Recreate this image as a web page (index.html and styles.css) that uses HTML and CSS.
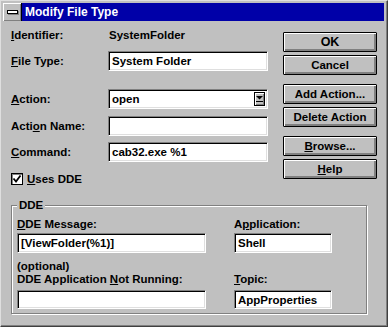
FILE: index.html
```html
<!DOCTYPE html>
<html lang="en">
<head>
    <meta charset="UTF-8">
    <title>Modify File Type</title>
    <link rel="stylesheet" href="styles.css">
</head>
<body>
    <div class="window">
        <div class="titlebar">
            <div class="sysmenu"><span class="sysmenu-bar"></span></div>
            <div class="title">Modify File Type</div>
        </div>

        <div class="dialog">
            <div class="top">
                <div class="fields">
                    <div class="row row-id">
                        <span class="label"><u>I</u>dentifier:</span>
                        <span class="value">SystemFolder</span>
                    </div>
                    <div class="row row-type">
                        <span class="label"><u>F</u>ile Type:</span>
                        <div class="edit">System Folder</div>
                    </div>
                    <div class="row row-action">
                        <span class="label"><u>A</u>ction:</span>
                        <div class="edit combo">
                            <span class="combo-text">open</span>
                            <span class="combo-btn">
                                <svg width="7" height="6" viewBox="0 0 7 6"><path d="M0 0h7L3.5 3.5z" fill="#000"/><rect x="0" y="5" width="7" height="1" fill="#000"/></svg>
                            </span>
                        </div>
                    </div>
                    <div class="row row-name">
                        <span class="label">Acti<u>o</u>n Name:</span>
                        <div class="edit"></div>
                    </div>
                    <div class="row row-cmd">
                        <span class="label"><u>C</u>ommand:</span>
                        <div class="edit">cab32.exe %1</div>
                    </div>
                    <div class="row row-dde">
                        <span class="checkbox">
                            <svg width="10" height="10" viewBox="0 0 10 10"><path d="M1.5 4.5l2.5 3 4.5-6" fill="none" stroke="#000" stroke-width="1.8"/></svg>
                        </span>
                        <span class="check-label"><u>U</u>ses DDE</span>
                    </div>
                </div>

                <div class="buttons">
                    <div class="btn btn-default">OK</div>
                    <div class="btn">Cancel</div>
                    <div class="btn btn-add">Add Action...</div>
                    <div class="btn">Delete Action</div>
                    <div class="btn btn-browse"><u>B</u>rowse...</div>
                    <div class="btn"><u>H</u>elp</div>
                </div>
            </div>

            <div class="groupbox">
                <div class="group-title">DDE</div>
                <div class="group-cols">
                    <div class="col col-left">
                        <div class="glabel"><u>D</u>DE Message:</div>
                        <div class="edit gedit">[ViewFolder(%1)]</div>
                        <div class="glabel glabel-gap">(optional)</div>
                        <div class="glabel">DDE Application <u>N</u>ot Running:</div>
                        <div class="edit gedit gedit-low"></div>
                    </div>
                    <div class="col col-right">
                        <div class="glabel">A<u>p</u>plication:</div>
                        <div class="edit gedit">Shell</div>
                        <div class="glabel glabel-topic"><u>T</u>opic:</div>
                        <div class="edit gedit gedit-low">AppProperties</div>
                    </div>
                </div>
            </div>
        </div>
    </div>
</body>
</html>
```

FILE: styles.css
```css
/* Old style Windows dialog, all grey and bold */
body {
    margin: 0;
    background-color: #c0c0c0;
    font-family: 'Liberation Sans', Arial, sans-serif;
    font-size: 11.5px;
    font-weight: bold;
    color: #000;
}
u {
    text-decoration-thickness: 1px;
    text-underline-offset: 1px;
}
.window {
    box-sizing: border-box;
    width: 388px;
    height: 327px;
    padding: 2px;
    background-color: #c0c0c0;
    border-top: 1px solid #dfdfdf;
    border-left: 1px solid #dfdfdf;
    border-right: 1px solid #404040;
    border-bottom: 1px solid #404040;
    box-shadow: inset -1px -1px 0 #808080;
}

/* Title bar */
.titlebar {
    display: flex;
    height: 18px;
    margin-right: 1px;
}
.sysmenu {
    box-sizing: border-box;
    width: 19px;
    height: 18px;
    background-color: #c0c0c0;
    border-right: 1px solid #000;
    box-shadow: inset 1px 1px 0 #fff, inset -1px -1px 0 #808080;
    display: flex;
    align-items: center;
    justify-content: center;
}
.sysmenu-bar {
    width: 9px;
    height: 2px;
    background-color: #fff;
    border: 1px solid #000;
    box-shadow: 1px 1px 0 #808080;
}
.title {
    flex-grow: 1;
    background-color: #0000a8;
    color: #fff;
    font-size: 12px;
    line-height: 18px;
    padding-left: 3px;
}

/* Dialog content */
.dialog {
    padding-left: 8px;
}
.top {
    display: flex;
    gap: 15px;
}
.fields {
    width: 257px;
    display: flex;
    flex-direction: column;
}
.row {
    display: flex;
    align-items: center;
    height: 20px;
}
.label {
    width: 97px;
    flex-shrink: 0;
}
.value {
    padding-left: 1px;
}
.row-id { margin-top: 4px; }
.row-type { margin-top: 6px; }
.row-action { margin-top: 18px; }
.row-name { margin-top: 7px; }
.row-cmd { margin-top: 6px; }
.row-dde { margin-top: 7px; }

.edit {
    box-sizing: border-box;
    width: 160px;
    height: 20px;
    padding-left: 3px;
    line-height: 18px;
    background-color: #fff;
    border-top: 1px solid #808080;
    border-left: 1px solid #808080;
    border-right: 1px solid #fff;
    border-bottom: 1px solid #fff;
    box-shadow: inset 1px 1px 0 #000, inset -1px -1px 0 #dfdfdf;
    white-space: nowrap;
    overflow: hidden;
}
.combo {
    display: flex;
    justify-content: space-between;
    padding-right: 2px;
}
.combo-btn {
    box-sizing: border-box;
    width: 11px;
    height: 14px;
    margin-top: 2px;
    background-color: #c0c0c0;
    border: 1px solid #000;
    box-shadow: inset 1px 1px 0 #fff, inset -1px -1px 0 #808080;
    display: flex;
    align-items: center;
    justify-content: center;
}
.checkbox {
    box-sizing: border-box;
    width: 12px;
    height: 12px;
    background-color: #fff;
    border: 1px solid #000;
    box-shadow: inset 1px 1px 0 #808080;
    display: flex;
    align-items: center;
    justify-content: center;
}
.check-label {
    margin-left: 4px;
}

/* Push buttons */
.buttons {
    width: 94px;
    margin-top: 11px;
    display: flex;
    flex-direction: column;
    gap: 3px;
}
.btn {
    box-sizing: border-box;
    height: 20px;
    line-height: 18px;
    text-align: center;
    border: 1px solid #000;
    border-radius: 1px;
    box-shadow: inset 1px 1px 0 #fff, inset -1px -1px 0 #808080, inset -2px -2px 0 #808080;
}
.btn-default {
    font-size: 12.5px;
}
.btn-add { margin-top: 6px; }
.btn-browse { margin-top: 6px; }

/* DDE group box */
.groupbox {
    box-sizing: border-box;
    width: 356px;
    margin-top: 16px;
    padding: 0 0 4px 5px;
    border: 1px solid #808080;
    box-shadow: inset 1px 1px 0 #fff, 1px 1px 0 #fff;
}
.group-title {
    display: inline-block;
    margin-top: -7px;
    padding: 0 2px;
    line-height: 13px;
    background-color: #c0c0c0;
    vertical-align: top;
}
.group-cols {
    display: flex;
    gap: 28px;
}
.col {
    display: flex;
    flex-direction: column;
}
.col-left { width: 189px; }
.col-right { width: 98px; }
.glabel {
    line-height: 13px;
}
.gedit {
    width: 100%;
    margin-top: 2px;
}
.glabel-gap { margin-top: 7px; }
.glabel-topic { margin-top: 20px; }
.gedit-low {
    height: 19px;
    margin-top: 4px;
}
```
